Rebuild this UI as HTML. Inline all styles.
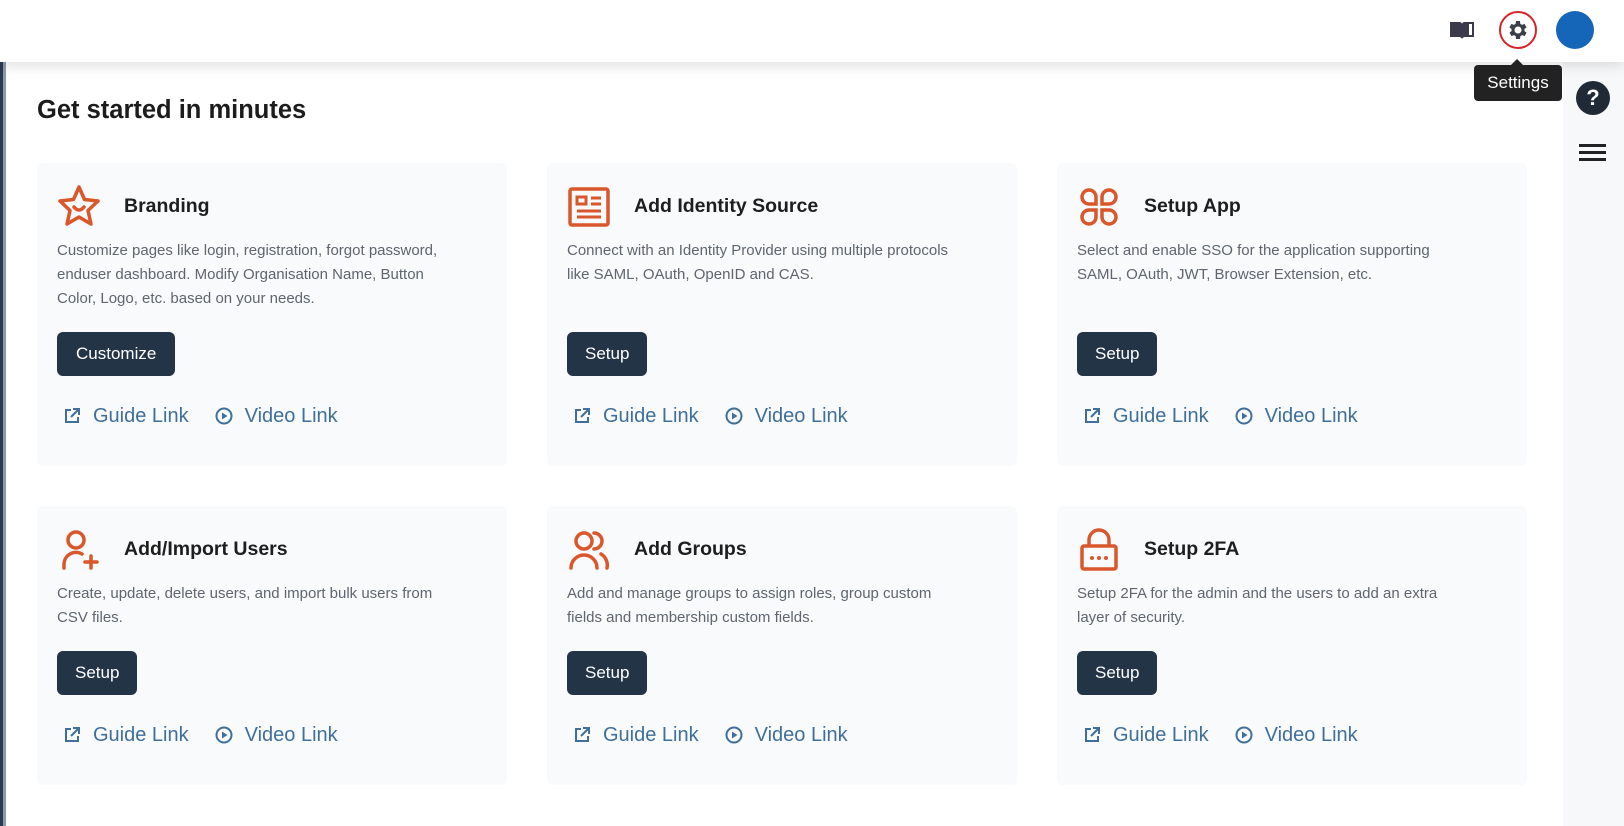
<!DOCTYPE html>
<html><head><meta charset="utf-8"><style>
*{margin:0;padding:0;box-sizing:border-box}
body{width:1624px;height:826px;overflow:hidden;background:#fff;font-family:"Liberation Sans",sans-serif;position:relative}
.hdr{position:absolute;left:0;top:0;width:1624px;height:62px;background:#fff;box-shadow:0 4px 12px rgba(0,0,0,.12);z-index:2}
.lbar{position:absolute;left:0;top:62px;width:6px;height:764px;background:linear-gradient(90deg,#2d3a4c 0 3px,#8a9bb0 3px)}
.rbar{position:absolute;left:1563px;top:62px;width:61px;height:764px;background:#f6f8fa}
h1{position:absolute;left:37px;top:96px;font-size:25.5px;font-weight:bold;color:#1c1c1c}
.card{position:absolute;width:470px;background:#f8fafb;border-radius:6px}
.ic{position:absolute;left:18px;top:20px;width:48px;height:48px}
.t{position:absolute;left:87px;top:32px;font-size:19.5px;font-weight:bold;color:#1e1e1e}
.d{position:absolute;left:20px;width:398px;font-size:15px;line-height:24px;color:#5f6670}
.b{position:absolute;left:20px;height:44px;padding:0 18px;background:#243447;color:#fff;border-radius:6px;font-size:17px;line-height:44px}
.l{position:absolute;left:26px;font-size:20px;color:#3f6f9a;display:flex;align-items:center;height:30px}
.l svg{width:18px;height:18px;margin-right:12px}
.l span{margin-right:26px}
</style></head><body>
<div class="hdr">
<svg style="position:absolute;left:1449px;top:19px" width="26" height="22" viewBox="0 0 26 22"><path d="M1 3h9c2 0 3 1 3 2v15c-.5-1-1.5-2-3-2H1z M25 3h-9c-2 0-3 1-3 2v15c.5-1 1.5-2 3-2h9z" fill="#3a3a4a"/><path d="M20 5h3v11h-3z" fill="#fff"/></svg>
<div style="position:absolute;left:1499px;top:11px;width:38px;height:38px;border:2px solid #d4252c;border-radius:50%"></div>
<svg style="position:absolute;left:1506px;top:18px" width="24" height="24" viewBox="0 0 24 24"><path fill="#3b3f4a" d="M19.4 13a7.5 7.5 0 0 0 0-2l2.1-1.6-2-3.5-2.5 1a7 7 0 0 0-1.7-1L15 3h-4l-.4 2.9a7 7 0 0 0-1.7 1l-2.5-1-2 3.5L6.6 11a7.5 7.5 0 0 0 0 2l-2.1 1.6 2 3.5 2.5-1a7 7 0 0 0 1.7 1L11 21h4l.4-2.9a7 7 0 0 0 1.7-1l2.5 1 2-3.5zM13 15.5a3.5 3.5 0 1 1 0-7 3.5 3.5 0 0 1 0 7z" transform="translate(-1 0)"/></svg>
<div style="position:absolute;left:1556px;top:11px;width:38px;height:38px;border-radius:50%;background:#1565b8"></div>
</div>
<div class="lbar"></div>
<div class="rbar"></div>
<div style="position:absolute;left:1474px;top:65px;width:88px;height:36px;background:#222;border-radius:4px;color:#fff;font-size:17px;line-height:36px;text-align:center;z-index:3">Settings<div style="position:absolute;left:37px;top:-6px;border:6px solid transparent;border-top:0;border-bottom-color:#222"></div></div>
<div style="position:absolute;left:1576px;top:81px;width:34px;height:34px;border-radius:50%;background:#1f2a36;color:#fff;font-weight:bold;font-size:22px;line-height:34px;text-align:center">?</div>
<div style="position:absolute;left:1579px;top:144px;width:27px;height:3px;background:#222;box-shadow:0 7px 0 #222,0 14px 0 #222"></div>
<h1>Get started in minutes</h1>

<div class="card" style="left:37px;top:163px;height:303px">
<svg class="ic" viewBox="0 0 48 48"><path d="M24 4l5.5 12.5 13.5 1.5-10 9.5 3 13.5L24 34l-12 7 3-13.5L5 18l13.5-1.5z" fill="none" stroke="#d9572b" stroke-width="3.5" stroke-linejoin="round"/><path d="M19 24q5 6 10 0" fill="none" stroke="#d9572b" stroke-width="3.5" stroke-linecap="round"/></svg>
<div class="t">Branding</div>
<div class="d" style="top:76px">Customize pages like login, registration, forgot password, enduser dashboard. Modify Organisation Name, Button Color, Logo, etc. based on your needs.</div>
<div class="b" style="top:169px;padding:0 19px">Customize</div>
<div class="l" style="top:238px"><svg viewBox="0 0 18 18"><path d="M8 3H3v12h12v-5M10 2h6v6M16 2L8 10" fill="none" stroke="#3f6f9a" stroke-width="2"/></svg><span>Guide Link</span><svg viewBox="0 0 18 18"><circle cx="9" cy="9" r="7.5" fill="none" stroke="#3f6f9a" stroke-width="2"/><path d="M7 5.5v7l5.5-3.5z" fill="#3f6f9a"/></svg><span>Video Link</span></div>
</div>

<div class="card" style="left:547px;top:163px;height:303px">
<svg class="ic" viewBox="0 0 48 48"><rect x="5" y="6" width="38" height="36" rx="2" fill="none" stroke="#d9572b" stroke-width="3.5"/><rect x="12" y="14" width="9" height="7" fill="none" stroke="#d9572b" stroke-width="3"/><path d="M26 15h10M26 21h10M12 28h24M12 34h24" stroke="#d9572b" stroke-width="3"/></svg>
<div class="t">Add Identity Source</div>
<div class="d" style="top:76px">Connect with an Identity Provider using multiple protocols like SAML, OAuth, OpenID and CAS.</div>
<div class="b" style="top:169px">Setup</div>
<div class="l" style="top:238px"><svg viewBox="0 0 18 18"><path d="M8 3H3v12h12v-5M10 2h6v6M16 2L8 10" fill="none" stroke="#3f6f9a" stroke-width="2"/></svg><span>Guide Link</span><svg viewBox="0 0 18 18"><circle cx="9" cy="9" r="7.5" fill="none" stroke="#3f6f9a" stroke-width="2"/><path d="M7 5.5v7l5.5-3.5z" fill="#3f6f9a"/></svg><span>Video Link</span></div>
</div>

<div class="card" style="left:1057px;top:163px;height:303px">
<svg class="ic" viewBox="0 0 48 48"><g fill="none" stroke="#d9572b" stroke-width="3.5"><path d="M21 21h-7a7 7 0 1 1 7-7z"/><path d="M27 21h7a7 7 0 1 0-7-7z"/><path d="M21 27h-7a7 7 0 1 0 7 7z"/><path d="M27 27h7a7 7 0 1 1-7 7z"/></g></svg>
<div class="t">Setup App</div>
<div class="d" style="top:76px">Select and enable SSO for the application supporting SAML, OAuth, JWT, Browser Extension, etc.</div>
<div class="b" style="top:169px">Setup</div>
<div class="l" style="top:238px"><svg viewBox="0 0 18 18"><path d="M8 3H3v12h12v-5M10 2h6v6M16 2L8 10" fill="none" stroke="#3f6f9a" stroke-width="2"/></svg><span>Guide Link</span><svg viewBox="0 0 18 18"><circle cx="9" cy="9" r="7.5" fill="none" stroke="#3f6f9a" stroke-width="2"/><path d="M7 5.5v7l5.5-3.5z" fill="#3f6f9a"/></svg><span>Video Link</span></div>
</div>

<div class="card" style="left:37px;top:506px;height:279px">
<svg class="ic" viewBox="0 0 48 48"><g fill="none" stroke="#d9572b" stroke-width="3.5" stroke-linecap="round"><circle cx="21" cy="14" r="8"/><path d="M9 42v-4a12 12 0 0 1 18-10"/><path d="M36 30v12M30 36h12"/></g></svg>
<div class="t">Add/Import Users</div>
<div class="d" style="top:76px">Create, update, delete users, and import bulk users from CSV files.</div>
<div class="b" style="top:145px">Setup</div>
<div class="l" style="top:214px"><svg viewBox="0 0 18 18"><path d="M8 3H3v12h12v-5M10 2h6v6M16 2L8 10" fill="none" stroke="#3f6f9a" stroke-width="2"/></svg><span>Guide Link</span><svg viewBox="0 0 18 18"><circle cx="9" cy="9" r="7.5" fill="none" stroke="#3f6f9a" stroke-width="2"/><path d="M7 5.5v7l5.5-3.5z" fill="#3f6f9a"/></svg><span>Video Link</span></div>
</div>

<div class="card" style="left:547px;top:506px;height:279px">
<svg class="ic" viewBox="0 0 48 48"><g fill="none" stroke="#d9572b" stroke-width="3.5" stroke-linecap="round"><circle cx="19" cy="15" r="8"/><path d="M6 42a13 13 0 0 1 26 0"/><path d="M29 7a8 8 0 0 1 0 16"/><path d="M36 28a13 13 0 0 1 6 14"/></g></svg>
<div class="t">Add Groups</div>
<div class="d" style="top:76px">Add and manage groups to assign roles, group custom fields and membership custom fields.</div>
<div class="b" style="top:145px">Setup</div>
<div class="l" style="top:214px"><svg viewBox="0 0 18 18"><path d="M8 3H3v12h12v-5M10 2h6v6M16 2L8 10" fill="none" stroke="#3f6f9a" stroke-width="2"/></svg><span>Guide Link</span><svg viewBox="0 0 18 18"><circle cx="9" cy="9" r="7.5" fill="none" stroke="#3f6f9a" stroke-width="2"/><path d="M7 5.5v7l5.5-3.5z" fill="#3f6f9a"/></svg><span>Video Link</span></div>
</div>

<div class="card" style="left:1057px;top:506px;height:279px">
<svg class="ic" viewBox="0 0 48 48"><g fill="none" stroke="#d9572b" stroke-width="3.5"><rect x="7" y="20" width="34" height="23" rx="2"/><path d="M14 20v-6a10 10 0 0 1 20 0v6"/></g><circle cx="17" cy="32" r="2" fill="#d9572b"/><circle cx="24" cy="32" r="2" fill="#d9572b"/><circle cx="31" cy="32" r="2" fill="#d9572b"/></svg>
<div class="t">Setup 2FA</div>
<div class="d" style="top:76px;width:380px">Setup 2FA for the admin and the users to add an extra layer of security.</div>
<div class="b" style="top:145px">Setup</div>
<div class="l" style="top:214px"><svg viewBox="0 0 18 18"><path d="M8 3H3v12h12v-5M10 2h6v6M16 2L8 10" fill="none" stroke="#3f6f9a" stroke-width="2"/></svg><span>Guide Link</span><svg viewBox="0 0 18 18"><circle cx="9" cy="9" r="7.5" fill="none" stroke="#3f6f9a" stroke-width="2"/><path d="M7 5.5v7l5.5-3.5z" fill="#3f6f9a"/></svg><span>Video Link</span></div>
</div>
</body></html>
